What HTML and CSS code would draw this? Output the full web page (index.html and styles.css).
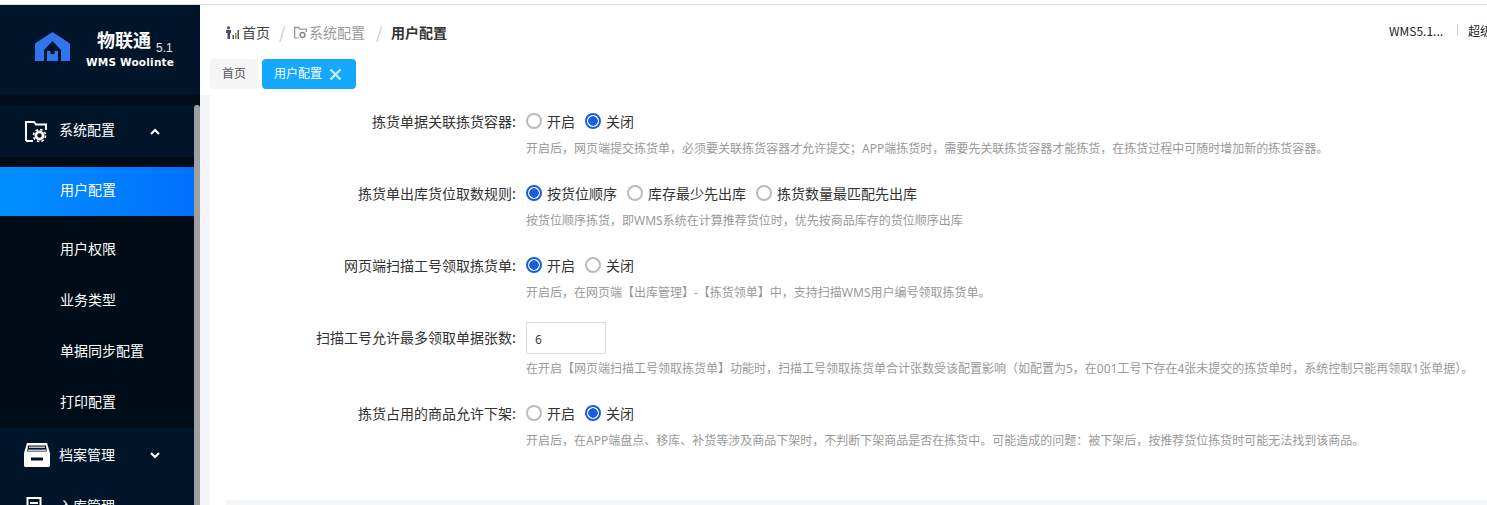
FILE: index.html
```html
<!DOCTYPE html>
<html lang="zh">
<head>
<meta charset="utf-8">
<title>用户配置</title>
<link rel="stylesheet" href="styles.css">
</head>
<body>
<div class="app">
  <aside class="side">
    <div class="logo">
      <svg class="logo-icon" viewBox="0 0 35 29" width="35" height="29"><path fill="#3174f0" d="M17.500 0 35 11.500V29H26V18L17.500 9 9 18V29H0V11.500Z"/><path fill="#3174f0" d="M12 19h3.500v3h4v-3H23v10H12Z"/></svg>
      <div class="logo-text">
        <div class="logo-line"><span class="logo-name">物联通</span><span class="logo-ver">5.1</span></div>
        <div class="logo-sub">WMS Woolinte</div>
      </div>
    </div>
    <div class="side-gap"></div>
    <div class="side-body">
      <nav class="menu">
        <div class="group group-open">
          <svg class="m-icon" viewBox="0 0 22 23" width="22" height="23"><path fill="none" stroke="#fff" stroke-width="2" d="M1 21V2h8l2 2.500h10V10"/><path fill="none" stroke="#fff" stroke-width="2" d="M1 21h7"/><circle cx="14.500" cy="15.500" r="3.600" fill="none" stroke="#fff" stroke-width="2.600"/><circle cx="14.500" cy="15.500" r="6" fill="none" stroke="#fff" stroke-width="1.600" stroke-dasharray="2.500 2.200"/></svg>
          <span class="m-text">系统配置</span>
          <svg class="caret" viewBox="0 0 10 7" width="10" height="7"><path fill="none" stroke="#fff" stroke-width="2" d="M1 6 5 2l4 4"/></svg>
        </div>
        <div class="subs">
          <div class="sub sub-active">用户配置</div>
          <div class="sub">用户权限</div>
          <div class="sub">业务类型</div>
          <div class="sub">单据同步配置</div>
          <div class="sub">打印配置</div>
        </div>
        <div class="group group-file">
          <svg class="m-icon" viewBox="0 0 26 24" width="26" height="24"><path fill="#fff" d="M3 0h20l3 10v13l-1 1H1l-1-1V10Z"/><path fill="#001529" d="M4 2.500h18l.8 6H3.200Z"/><path fill="#bcc2c9" d="M5 3.500h16v1.500H5Zm-1 3h18v1.500H4Z"/><path fill="#001529" d="M7 14.500h12v3H7Z"/></svg>
          <span class="m-text">档案管理</span>
          <svg class="caret" viewBox="0 0 10 7" width="10" height="7"><path fill="none" stroke="#fff" stroke-width="2" d="M1 1l4 4 4-4"/></svg>
        </div>
        <div class="group group-in">
          <svg class="m-icon m-icon-in" viewBox="0 0 16 24" width="16" height="24"><path fill="none" stroke="#fff" stroke-width="2" d="M1.500 1h13v22h-13Z"/><path fill="none" stroke="#fff" stroke-width="2" d="M4 6h8M4 10h5"/></svg>
          <span class="m-text">入库管理</span>
        </div>
      </nav>
      <div class="thumb"></div>
    </div>
  </aside>

  <main class="main">
    <header class="top">
      <div class="crumbs">
        <svg class="c-icon" viewBox="0 0 13 13" width="13" height="13"><circle cx="2.500" cy="1.800" r="1.600" fill="#46525f"/><path fill="#46525f" d="M0 4h5v3H4v6H1.500V7H0Z"/><path fill="#46525f" d="M6.500 9h1.500v4H6.500Z"/><path fill="#a08a3c" d="M9 7h1.500v6H9Z"/><path fill="#46525f" d="M11.500 4H13v9h-1.500Z"/></svg>
        <span class="c-link">首页</span>
        <span class="c-sep">/</span>
        <svg class="c-icon2" viewBox="0 0 13 13" width="13" height="13"><path fill="none" stroke="#999" stroke-width="1.300" d="M.7 12V1.500h4l1.200 1.700h6.400V6"/><path fill="none" stroke="#999" d="M.7 12h4"/><circle cx="8.500" cy="9" r="2.400" fill="none" stroke="#888" stroke-width="1.500"/></svg>
        <span class="c-mute">系统配置</span>
        <span class="c-sep c-sep2">/</span>
        <span class="c-now">用户配置</span>
      </div>
      <div class="user">
        <span class="ver">WMS5.1...</span>
        <span class="divider"></span>
        <span class="uname">超级</span>
      </div>
    </header>
    <div class="tabs">
      <div class="tab">首页</div>
      <div class="tab tab-on">用户配置<svg class="tab-x" viewBox="0 0 13 13" width="13" height="13"><path stroke="#cfeaff" stroke-width="2.400" d="M1.500 1.500l10 10M11.500 1.500l-10 10"/></svg></div>
    </div>
    <div class="body">
      <section class="panel">
        <div class="row">
          <div class="label">拣货单据关联拣货容器:</div>
          <div class="ctl">
            <span class="opt"><i class="radio"></i>开启</span>
            <span class="opt"><i class="radio radio-on"></i>关闭</span>
          </div>
          <p class="help">开启后，网页端提交拣货单，必须要关联拣货容器才允许提交；APP端拣货时，需要先关联拣货容器才能拣货，在拣货过程中可随时增加新的拣货容器。</p>
        </div>
        <div class="row">
          <div class="label">拣货单出库货位取数规则:</div>
          <div class="ctl">
            <span class="opt"><i class="radio radio-on"></i>按货位顺序</span>
            <span class="opt"><i class="radio"></i>库存最少先出库</span>
            <span class="opt"><i class="radio"></i>拣货数量最匹配先出库</span>
          </div>
          <p class="help">按货位顺序拣货，即WMS系统在计算推荐货位时，优先按商品库存的货位顺序出库</p>
        </div>
        <div class="row">
          <div class="label">网页端扫描工号领取拣货单:</div>
          <div class="ctl">
            <span class="opt"><i class="radio radio-on"></i>开启</span>
            <span class="opt"><i class="radio"></i>关闭</span>
          </div>
          <p class="help">开启后，在网页端【出库管理】-【拣货领单】中，支持扫描WMS用户编号领取拣货单。</p>
        </div>
        <div class="row row-input">
          <div class="label">扫描工号允许最多领取单据张数:</div>
          <div class="ctl"><input class="num" type="text" value="6"></div>
          <p class="help">在开启【网页端扫描工号领取拣货单】功能时，扫描工号领取拣货单合计张数受该配置影响（如配置为5，在001工号下存在4张未提交的拣货单时，系统控制只能再领取1张单据）。</p>
        </div>
        <div class="row">
          <div class="label">拣货占用的商品允许下架:</div>
          <div class="ctl">
            <span class="opt"><i class="radio"></i>开启</span>
            <span class="opt"><i class="radio radio-on"></i>关闭</span>
          </div>
          <p class="help">开启后，在APP端盘点、移库、补货等涉及商品下架时，不判断下架商品是否在拣货中。可能造成的问题：被下架后，按推荐货位拣货时可能无法找到该商品。</p>
        </div>
        <div class="band"></div>
      </section>
    </div>
  </main>
</div>
</body>
</html>
```
FILE: styles.css
```css
* { box-sizing: border-box; }
html, body { margin: 0; height: 100%; overflow: hidden; background: #fff; }
body { font-family: "Noto Sans CJK SC", "Noto Sans", sans-serif; font-size: 14px; color: #333; }
.app { display: flex; height: 505px; padding-top: 5px; background: linear-gradient(#fff 4px, #dcdde1 4px, #dcdde1 5px, #fff 5px); }

.side { width: 200px; flex: none; display: flex; flex-direction: column; background: #00152a; color: #fff; }
.logo { height: 90px; flex: none; display: flex; align-items: flex-start; padding: 27px 0 0 35px; }
.logo-icon { display: block; }
.logo-text { margin-left: 16px; margin-top: -4px; width: 90px; }
.logo-line { display: flex; align-items: flex-end; height: 22px; padding-left: 11px; }
.logo-name { font-size: 18px; font-weight: 700; line-height: 22px; }
.logo-ver { font-size: 12px; line-height: 16px; margin: 0 0 -6px 5px; color: #e6e6e6; font-family: "Liberation Sans", sans-serif; }
.logo-sub { font-family: "DejaVu Sans", sans-serif; font-weight: 700; font-size: 10.500px; line-height: 14px; margin-top: 5px; white-space: nowrap; letter-spacing: .2px; }
.side-gap { height: 10px; flex: none; background: #020d18; }
.side-body { flex: 1; display: flex; min-height: 0; overflow: hidden; }
.menu { flex: 1; min-width: 0; }
.thumb { width: 6px; flex: none; background: #9f9f9f; border-radius: 3px 3px 0 0; }

.group { display: flex; align-items: center; height: 51px; padding-left: 24px; background: #001529; position: relative; }
.group-open { height: 52px; background: #00152a; padding-left: 25px; }
.group-file { height: 53px; }
.m-icon { flex: none; display: block; }
.m-icon-in { margin-top: 5px; }
.m-text { position: absolute; left: 59px; top: 50%; margin-top: -12px; font-size: 14px; line-height: 20px; }
.group-file .m-text { margin-top: -11px; }
.caret { position: absolute; left: 150px; top: 50%; margin-top: -3px; }
.group-in { padding-left: 26px; }

.subs { background: #000c17; padding-top: 10px; }
.sub { height: 51px; line-height: 49px; padding-left: 60px; font-size: 14px; color: #fff; }
.sub-active { height: 49px; line-height: 45px; margin-bottom: 8px; background: linear-gradient(90deg, #0090ff, #0070ff); }

.main { flex: 1; min-width: 0; display: flex; flex-direction: column; overflow: hidden; }
.top { height: 54px; flex: none; display: flex; align-items: center; justify-content: space-between; padding: 0 0 0 26px; }
.crumbs { display: flex; align-items: center; line-height: 20px; }
.c-icon { flex: none; }
.c-link { margin-left: 3px; color: #444; }
.c-sep { margin: 0 9px 0 9px; color: #c8c8c8; font-size: 16px; width: 6px; }
.c-sep2 { margin: 0 9px 0 11px; }
.c-icon2 { flex: none; }
.c-mute { margin-left: 2px; color: #999; }
.c-now { color: #333; font-weight: 700; }
.user { display: flex; align-items: center; width: 99px; flex: none; overflow: hidden; white-space: nowrap; font-size: 12px; color: #222; margin-top: -4px; }
.ver { width: 57px; flex: none; font-size: 12px; margin-left: 1px; }
.divider { width: 1px; height: 12px; background: #d4d4d4; flex: none; margin: 0 10px 0 11px; }
.uname { flex: none; }

.tabs { height: 36px; flex: none; display: flex; gap: 4px; padding-left: 10px; align-items: flex-start; }
.tab { height: 30px; display: flex; align-items: center; padding: 0 12px 2px; font-size: 12px; line-height: 16px; background: #f5f5f5; color: #555; border-radius: 4px; }
.tab-on { background: #14a9ff; color: #fff; }
.tab-x { margin: 2px 2px 0 7px; }

.body { flex: 1; min-height: 0; background: #f3f5fa; padding-left: 10px; }
.panel { background: #fff; height: 100%; padding-top: 11px; display: flex; flex-direction: column; }
.row { display: grid; grid-template-columns: 308px 1fr; column-gap: 8px; margin-bottom: 20px; }
.label { text-align: right; line-height: 30px; height: 32px; padding-right: 2px; color: #333; font-size: 14px; white-space: nowrap; }
.ctl { display: flex; align-items: center; height: 32px; padding-bottom: 2px; gap: 10px; }
.row-input .ctl { padding-bottom: 0; }
.help { grid-column: 2; margin: 2px 0 0; font-family: "Noto Sans", "Noto Sans CJK SC", sans-serif; font-size: 12px; line-height: 18px; color: #999; white-space: nowrap; height: 18px; }
.row-input .help { margin-top: 6px; }
.opt { display: inline-flex; align-items: center; gap: 5px; color: #333; white-space: nowrap; }
.radio { width: 16px; height: 16px; border-radius: 50%; border: 2px solid #bbb; background: #fff; flex: none; }
.radio-on { border-color: #1a5fdc; background: radial-gradient(circle, #1a5fdc 0 4.500px, #fff 5px); }
.num { width: 80px; height: 32px; padding: 2px 8px 0; border: 1px solid #ddd; border-radius: 0; font: 12px "Noto Sans", sans-serif; color: #444; outline: 0; background: #fff; display: block; }
.band { height: 5px; margin: auto 0 0 16px; background: #f5f6f8; flex: none; }
```
